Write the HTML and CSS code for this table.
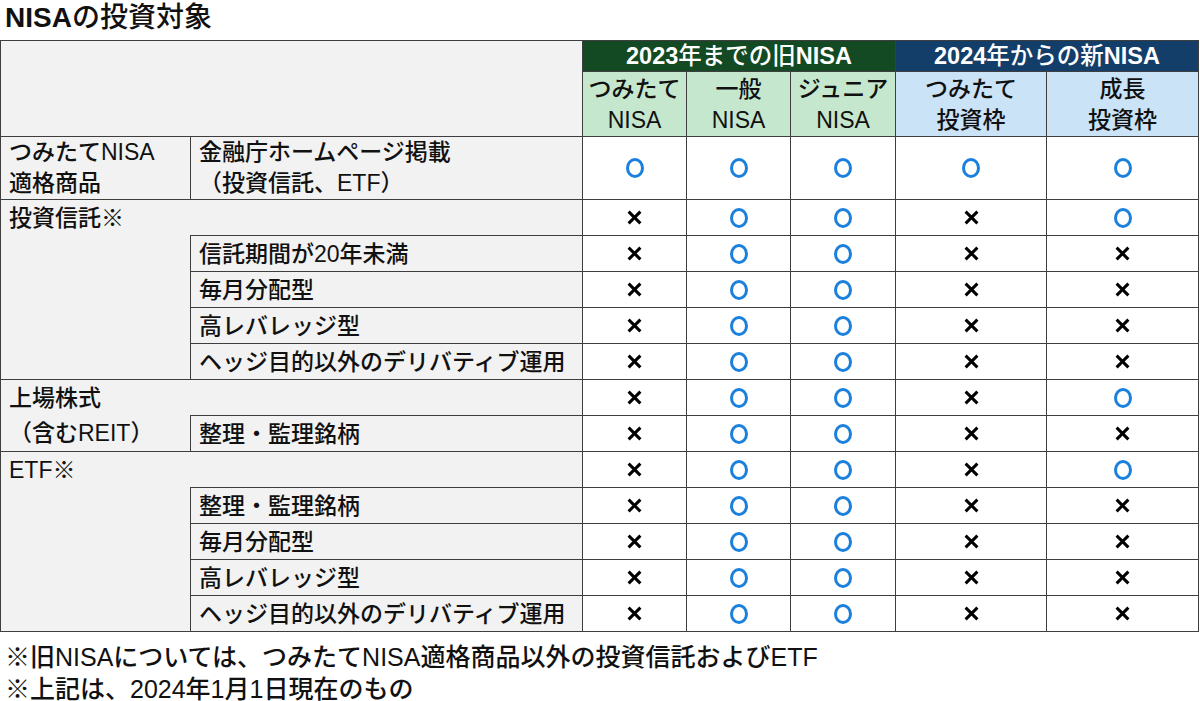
FILE: index.html
```html
<!DOCTYPE html>
<html lang="ja">
<head>
<meta charset="utf-8">
<title>NISAの投資対象</title>
<link rel="stylesheet" href="styles.css">
</head>
<body>
<svg class="defs" width="0" height="0" aria-hidden="true">
  <defs>
    <symbol id="x" viewBox="0 0 15 15"><path d="M1.6 1.6L13.4 13.4M13.4 1.6L1.6 13.4" stroke="#000" stroke-width="3" fill="none"/></symbol>
  </defs>
</svg>
<div class="page">
  <h1 class="title">NISAの投資対象</h1>
  <table class="grid">
    <colgroup>
      <col class="c-a"><col class="c-b"><col class="c-n"><col class="c-n"><col class="c-n2"><col class="c-w"><col class="c-w2">
    </colgroup>
    <thead>
      <tr class="h1">
        <th class="blank" colspan="2" rowspan="2"></th>
        <th class="old" colspan="3">2023年までの旧NISA</th>
        <th class="new" colspan="2">2024年からの新NISA</th>
      </tr>
      <tr class="h2">
        <th class="old-s">つみたて<br>NISA</th>
        <th class="old-s">一般<br>NISA</th>
        <th class="old-s">ジュニア<br>NISA</th>
        <th class="new-s">つみたて<br>投資枠</th>
        <th class="new-s">成長<br>投資枠</th>
      </tr>
    </thead>
    <tbody>
      <tr class="r-tall">
        <td class="lbl">つみたてNISA<br>適格商品</td>
        <td class="lbl">金融庁ホームページ掲載<br>（投資信託、ETF）</td>
        <td class="m"><span class="o"></span></td>
        <td class="m"><span class="o"></span></td>
        <td class="m"><span class="o"></span></td>
        <td class="m"><span class="o"></span></td>
        <td class="m"><span class="o"></span></td>
      </tr>
      <tr class="r-head">
        <td class="lbl open-b" colspan="2">投資信託※</td>
        <td class="m"><svg class="x"><use href="#x"/></svg></td>
        <td class="m"><span class="o"></span></td>
        <td class="m"><span class="o"></span></td>
        <td class="m"><svg class="x"><use href="#x"/></svg></td>
        <td class="m"><span class="o"></span></td>
      </tr>
      <tr class="r">
        <td class="lbl open-t" rowspan="4"></td>
        <td class="lbl">信託期間が20年未満</td>
        <td class="m"><svg class="x"><use href="#x"/></svg></td>
        <td class="m"><span class="o"></span></td>
        <td class="m"><span class="o"></span></td>
        <td class="m"><svg class="x"><use href="#x"/></svg></td>
        <td class="m"><svg class="x"><use href="#x"/></svg></td>
      </tr>
      <tr class="r">
        <td class="lbl">毎月分配型</td>
        <td class="m"><svg class="x"><use href="#x"/></svg></td>
        <td class="m"><span class="o"></span></td>
        <td class="m"><span class="o"></span></td>
        <td class="m"><svg class="x"><use href="#x"/></svg></td>
        <td class="m"><svg class="x"><use href="#x"/></svg></td>
      </tr>
      <tr class="r">
        <td class="lbl">高レバレッジ型</td>
        <td class="m"><svg class="x"><use href="#x"/></svg></td>
        <td class="m"><span class="o"></span></td>
        <td class="m"><span class="o"></span></td>
        <td class="m"><svg class="x"><use href="#x"/></svg></td>
        <td class="m"><svg class="x"><use href="#x"/></svg></td>
      </tr>
      <tr class="r">
        <td class="lbl">ヘッジ目的以外のデリバティブ運用</td>
        <td class="m"><svg class="x"><use href="#x"/></svg></td>
        <td class="m"><span class="o"></span></td>
        <td class="m"><span class="o"></span></td>
        <td class="m"><svg class="x"><use href="#x"/></svg></td>
        <td class="m"><svg class="x"><use href="#x"/></svg></td>
      </tr>
      <tr class="r">
        <td class="lbl top open-r" rowspan="2">上場株式<br>（含むREIT）</td>
        <td class="lbl open-l"></td>
        <td class="m"><svg class="x"><use href="#x"/></svg></td>
        <td class="m"><span class="o"></span></td>
        <td class="m"><span class="o"></span></td>
        <td class="m"><svg class="x"><use href="#x"/></svg></td>
        <td class="m"><span class="o"></span></td>
      </tr>
      <tr class="r">
        <td class="lbl">整理・監理銘柄</td>
        <td class="m"><svg class="x"><use href="#x"/></svg></td>
        <td class="m"><span class="o"></span></td>
        <td class="m"><span class="o"></span></td>
        <td class="m"><svg class="x"><use href="#x"/></svg></td>
        <td class="m"><svg class="x"><use href="#x"/></svg></td>
      </tr>
      <tr class="r-head">
        <td class="lbl open-b" colspan="2">ETF※</td>
        <td class="m"><svg class="x"><use href="#x"/></svg></td>
        <td class="m"><span class="o"></span></td>
        <td class="m"><span class="o"></span></td>
        <td class="m"><svg class="x"><use href="#x"/></svg></td>
        <td class="m"><span class="o"></span></td>
      </tr>
      <tr class="r">
        <td class="lbl open-t" rowspan="4"></td>
        <td class="lbl">整理・監理銘柄</td>
        <td class="m"><svg class="x"><use href="#x"/></svg></td>
        <td class="m"><span class="o"></span></td>
        <td class="m"><span class="o"></span></td>
        <td class="m"><svg class="x"><use href="#x"/></svg></td>
        <td class="m"><svg class="x"><use href="#x"/></svg></td>
      </tr>
      <tr class="r">
        <td class="lbl">毎月分配型</td>
        <td class="m"><svg class="x"><use href="#x"/></svg></td>
        <td class="m"><span class="o"></span></td>
        <td class="m"><span class="o"></span></td>
        <td class="m"><svg class="x"><use href="#x"/></svg></td>
        <td class="m"><svg class="x"><use href="#x"/></svg></td>
      </tr>
      <tr class="r">
        <td class="lbl">高レバレッジ型</td>
        <td class="m"><svg class="x"><use href="#x"/></svg></td>
        <td class="m"><span class="o"></span></td>
        <td class="m"><span class="o"></span></td>
        <td class="m"><svg class="x"><use href="#x"/></svg></td>
        <td class="m"><svg class="x"><use href="#x"/></svg></td>
      </tr>
      <tr class="r">
        <td class="lbl">ヘッジ目的以外のデリバティブ運用</td>
        <td class="m"><svg class="x"><use href="#x"/></svg></td>
        <td class="m"><span class="o"></span></td>
        <td class="m"><span class="o"></span></td>
        <td class="m"><svg class="x"><use href="#x"/></svg></td>
        <td class="m"><svg class="x"><use href="#x"/></svg></td>
      </tr>
    </tbody>
  </table>
  <div class="notes">
    <p>※旧NISAについては、つみたてNISA適格商品以外の投資信託およびETF</p>
    <p>※上記は、2024年1月1日現在のもの</p>
  </div>
</div>
</body>
</html>
```

FILE: styles.css
```css
html, body {
  margin: 0;
  padding: 0;
  background: #ffffff;
}
body {
  font-family: "Liberation Sans", "Noto Sans CJK JP Medium", "Noto Sans CJK JP", sans-serif;
  font-weight: 500;
  color: #111111;
  width: 1200px;
  height: 701px;
  overflow: hidden;
}
.defs {
  position: absolute;
  width: 0;
  height: 0;
}
.page {
  display: flex;
  flex-direction: column;
}
.title {
  margin: 0;
  padding-left: 5px;
  height: 40px;
  line-height: 36px;
  font-size: 28px;
  font-weight: 700;
  color: #111;
}
.grid {
  border-collapse: collapse;
  table-layout: fixed;
  width: 1198px;
  font-size: 23px;
}
.c-a { width: 190px; }
.c-b { width: 392px; }
.c-n { width: 104px; }
.c-n2 { width: 105px; }
.c-w { width: 151px; }
.c-w2 { width: 152px; }

.grid th, .grid td {
  border: 1px solid #3e3e3e;
  padding: 0;
}
.grid th {
  font-weight: 500;
  text-align: center;
  vertical-align: middle;
}
.h1 { height: 31px; }
.grid .h1 th { line-height: 27px; font-weight: 700; font-size: 23.5px; }
.h2 { height: 63px; }
.grid .h2 th { line-height: 31px; padding-top: 2px; }
.grid .blank { background: #f2f2f2; }
.grid .old { background: #134a24; color: #ffffff; }
.grid .new { background: #143e6a; color: #ffffff; }
.grid .old-s { background: #c5e7cd; color: #111; }
.grid .new-s { background: #cbe3f6; color: #111; }

.r-tall { height: 63px; }
.r-head { height: 36px; }
.r { height: 36px; }

.grid .lbl {
  background: #f2f2f2;
  text-align: left;
  vertical-align: middle;
  padding: 0 8px;
  line-height: 32px;
  white-space: nowrap;
}
.grid .r-tall .lbl {
  line-height: 31px;
}
.grid .lbl.top {
  vertical-align: top;
  line-height: 35px;
  padding-top: 1px;
}
.grid .open-b { border-bottom: none; }
.grid .open-t { border-top: none; }
.grid .open-r { border-right: none; }
.grid .open-l { border-left: none; }

.grid .m {
  background: #ffffff;
  text-align: center;
  vertical-align: middle;
  line-height: 0;
}
.o {
  display: inline-block;
  width: 12px;
  height: 14px;
  border: 3.2px solid #1b7fdc;
  border-radius: 50%;
}
.x {
  display: inline-block;
  width: 15px;
  height: 15px;
}

.notes {
  padding: 9px 0 0 5px;
  font-size: 25px;
}
.notes p {
  margin: 0;
  line-height: 32px;
}
```
